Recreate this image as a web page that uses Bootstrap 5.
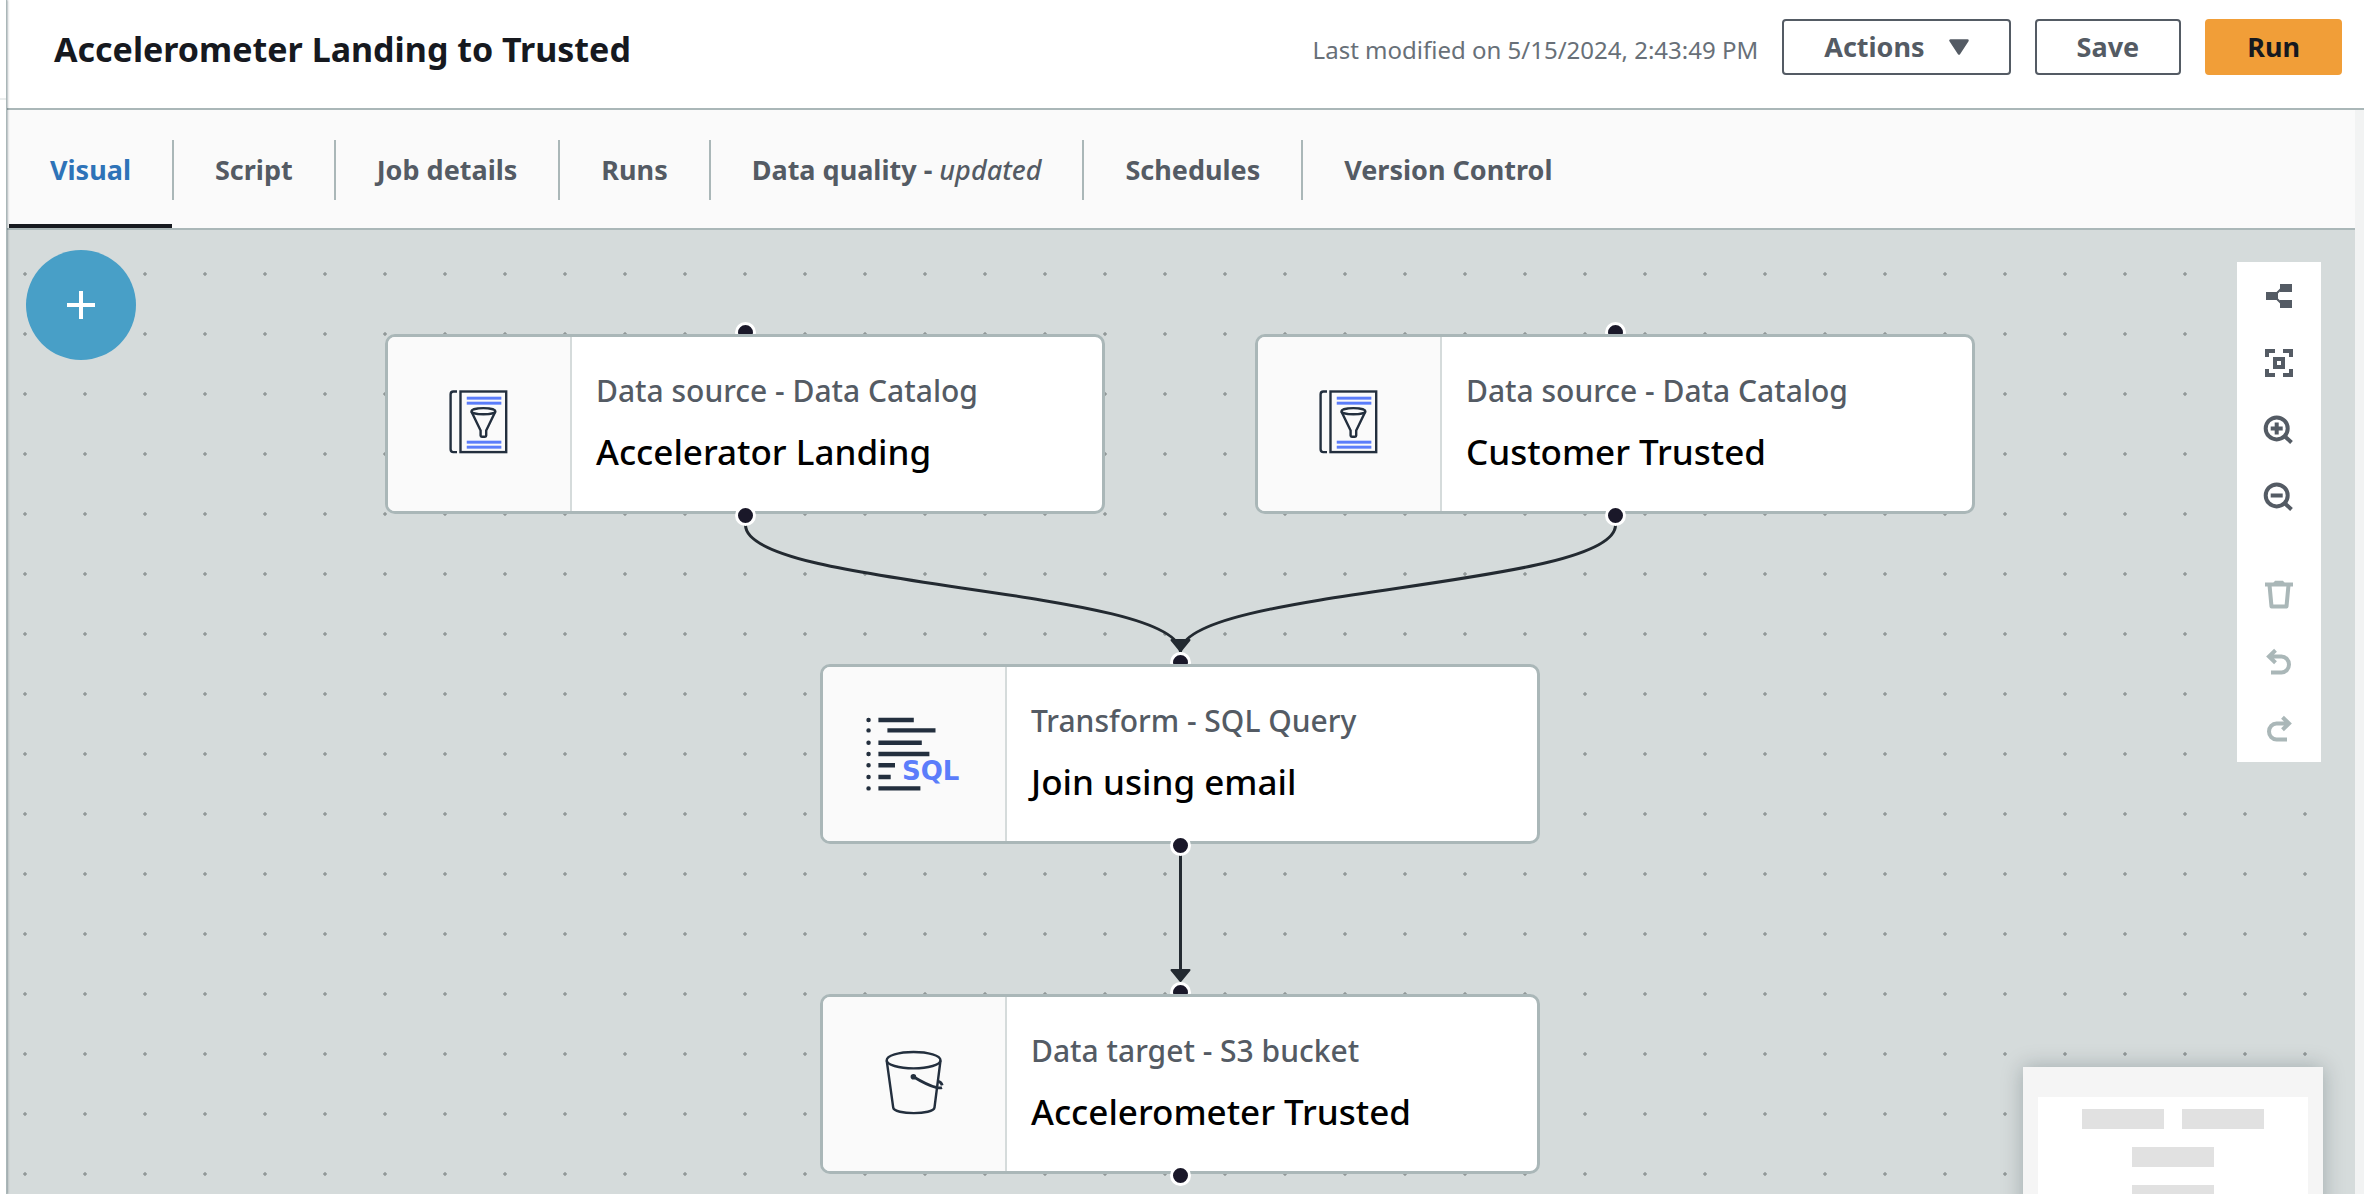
<!DOCTYPE html>
<html lang="en">
<head>
<meta charset="utf-8">
<meta name="viewport" content="width=device-width, initial-scale=1">
<title>Accelerometer Landing to Trusted</title>
<link href="https://cdn.jsdelivr.net/npm/bootstrap@5.3.0/dist/css/bootstrap.min.css" rel="stylesheet">
<style>
  body { font-family: "Noto Sans", "Open Sans", sans-serif; color: #16191f; background: #fff; }
  /* collapsed side panel */
  .side-edge { width: 7px; border-right: 1px solid #aab7b8; box-shadow: 1px 0 2px rgba(0, 28, 36, .3); z-index: 3; padding-top: 98px; }
  .side-edge hr { margin: 0; border-top: 2px solid #eaeded; opacity: 1; }
  /* header */
  .job-header { padding: 19px 22px 33px 47px; border-bottom: 2px solid #aab7b8; }
  .job-title { font-size: 34px; line-height: 60px; height: 56px; font-weight: 700; }
  .modified { font-size: 24px; line-height: 62px; height: 56px; color: #687078; }
  .btn-job { height: 56px; padding: 0 40px; border: 2px solid #545b64; border-radius: 4px; font-size: 27px; line-height: 52px; font-weight: 700; color: #545b64; background: #fff; }
  .btn-job:hover { background: #fafafa; border-color: #16191f; color: #16191f; }
  .btn-run { background: #f19e38; border-color: #f19e38; color: #16191f; }
  .btn-run:hover { background: #e88b01; border-color: #e88b01; }
  /* tabs */
  .work { background: #f2f3f3; padding-right: 9px; }
  .job-tabs { background: #fafafa; border-bottom: 2px solid #aab7b8; padding-left: 2px; }
  .job-tabs .nav-item { display: flex; align-items: center; }
  .job-tabs .nav-item + .nav-item::before { content: ""; width: 2px; height: 60px; margin-top: 2px; background: #aab7b8; }
  .job-tabs .nav-link { height: 118px; padding: 4px 41px 0; border: 0; border-bottom: 4px solid transparent; border-radius: 0; font-size: 27px; line-height: 112px; font-weight: 700; color: #545b64; background: none; }
  .job-tabs .nav-link em { font-weight: 500; }
  .job-tabs .nav-link.active { color: #2e73b8; border-bottom-color: #16191f; }
  /* canvas */
  .graph { background: #d5dbdb radial-gradient(circle at 30px 30px, #919898 1px, #b4bbbb 2px, transparent 2px) -12px 14px / 60px 60px; }
  .edges { position: absolute; left: 0; top: 0; width: 100%; height: 100%; pointer-events: none; }
  .graph-node { position: absolute; width: 720px; height: 180px; }
  .n-source-a { left: 378px; top: 104px; }
  .n-source-b { left: 1248px; top: 104px; }
  .n-join { left: 813px; top: 434px; }
  .n-target { left: 813px; top: 764px; }
  .node-box { position: relative; height: 100%; background: #fff; border: 3px solid #aab7b8; border-radius: 10px; overflow: hidden; }
  .node-icon { width: 184px; background: #fafafa; border-right: 2px solid #d5dbdb; }
  .node-text { padding-left: 24px; gap: 16px; }
  .node-kind { font-size: 30px; line-height: 40px; font-weight: 500; color: #545b64; }
  .node-name { font-size: 35px; line-height: 50px; font-weight: 500; color: #000; }
  .port { position: absolute; left: 50%; width: 21px; height: 21px; margin-left: -10px; border: 3px solid #fff; border-radius: 50%; background: #1a1829; }
  .port-in { top: -12px; }
  .port-out { bottom: -12px; }
  .add-node { position: absolute; left: 19px; top: 20px; width: 110px; height: 110px; border: 0; border-radius: 50%; background: #489fc7; }
  .tools { position: absolute; right: 34px; top: 32px; width: 84px; background: #fff; }
  .tools button { height: 67px; padding: 0; border: 0; border-radius: 0; color: #545b64; }
  .tools button:disabled { color: #aab7b8; opacity: 1; }
  .tools .tool-gap { margin-top: 31px; }
  .minimap { position: absolute; right: 32px; top: 837px; width: 300px; height: 300px; padding: 30px 15px; background: #f5f5f5; box-shadow: 0 0 20px rgba(0, 28, 36, .25); }
</style>
<script src="https://cdn.jsdelivr.net/npm/bootstrap@5.3.0/dist/js/bootstrap.bundle.min.js"></script>
</head>
<body class="d-flex vh-100 overflow-hidden">
<aside class="side-edge flex-shrink-0"><hr></aside>
<div class="d-flex flex-column flex-grow-1">
  <header class="job-header d-flex align-items-start gap-4">
    <h1 class="job-title mb-0 me-auto">Accelerometer Landing to Trusted</h1>
    <span class="modified">Last modified on 5/15/2024, 2:43:49 PM</span>
    <button type="button" class="btn btn-job d-flex align-items-center">Actions
      <svg class="ms-4" width="20" height="16" viewBox="0 0 20 16" aria-hidden="true"><path d="M1.5 1.5h17L10 14.5z" fill="currentColor" stroke="currentColor" stroke-width="2.5" stroke-linejoin="round"/></svg>
    </button>
    <button type="button" class="btn btn-job">Save</button>
    <button type="button" class="btn btn-job btn-run">Run</button>
  </header>
  <div class="work d-flex flex-column flex-grow-1">
    <ul class="nav job-tabs" role="tablist">
      <li class="nav-item"><button class="nav-link active" type="button" role="tab" aria-selected="true">Visual</button></li>
      <li class="nav-item"><button class="nav-link" type="button" role="tab">Script</button></li>
      <li class="nav-item"><button class="nav-link" type="button" role="tab">Job details</button></li>
      <li class="nav-item"><button class="nav-link" type="button" role="tab">Runs</button></li>
      <li class="nav-item"><button class="nav-link" type="button" role="tab">Data quality - <em>updated</em></button></li>
      <li class="nav-item"><button class="nav-link" type="button" role="tab">Schedules</button></li>
      <li class="nav-item"><button class="nav-link" type="button" role="tab">Version Control</button></li>
    </ul>
    <main class="graph position-relative flex-grow-1 overflow-hidden">
      <svg width="0" height="0" class="position-absolute" aria-hidden="true">
        <symbol id="catalog" viewBox="0 0 72 72">
          <g fill="none" stroke="#232f3e" stroke-width="2.4">
            <rect x="17.5" y="3.5" width="45.7" height="60.6"/>
            <path d="M14 3.5h-3.6Q7.6 3.5 7.6 6.3v55Q7.6 64.1 10.4 64.1H14"/>
            <ellipse cx="40.4" cy="23.2" rx="12" ry="3.1"/>
            <path d="M28.4 23.4l9.2 19.2v5q0 1.2 1.2 1.2h3.2q1.2 0 1.2-1.2v-5l9.2-19.2" stroke-linejoin="round"/>
          </g>
          <path d="M23.8 10h34.5M23.8 15h34.5M23.8 54h34.5M23.8 59h34.5" stroke="#c9d3fb" stroke-width="4"/>
          <path d="M23.8 10.2h34.5M23.8 15.2h34.5M23.8 54.2h34.5M23.8 59.2h34.5" stroke="#5b7dfa" stroke-width="2.4"/>
        </symbol>
      </svg>
      <svg class="edges" aria-hidden="true">
        <g fill="none" stroke="#232a31" stroke-width="3">
          <path d="M738.5 295C738.5 358 1173.5 358 1173.5 422"/>
          <path d="M1608.5 295C1608.5 358 1173.5 358 1173.5 422"/>
          <path d="M1173.5 625V742"/>
        </g>
        <g fill="#232a31" stroke="#232a31" stroke-width="2" stroke-linejoin="round">
          <path d="M1164.5 410h18l-9 11z"/>
          <path d="M1164.5 740h18l-9 11z"/>
        </g>
      </svg>

      <div class="graph-node n-source-a">
        <span class="port port-in"></span>
        <div class="node-box d-flex">
          <div class="node-icon d-flex align-items-center justify-content-center"><svg width="72" height="72"><use href="#catalog"/></svg></div>
          <div class="node-text d-flex flex-column justify-content-center"><div class="node-kind">Data source - Data Catalog</div><div class="node-name">Accelerator Landing</div></div>
        </div>
        <span class="port port-out"></span>
      </div>
      <div class="graph-node n-source-b">
        <span class="port port-in"></span>
        <div class="node-box d-flex">
          <div class="node-icon d-flex align-items-center justify-content-center"><svg width="72" height="72"><use href="#catalog"/></svg></div>
          <div class="node-text d-flex flex-column justify-content-center"><div class="node-kind">Data source - Data Catalog</div><div class="node-name">Customer Trusted</div></div>
        </div>
        <span class="port port-out"></span>
      </div>
      <div class="graph-node n-join">
        <span class="port port-in"></span>
        <div class="node-box d-flex">
          <div class="node-icon d-flex align-items-center justify-content-center">
            <svg width="96" height="80" viewBox="0 0 96 80">
              <path d="M12.4 6h35.4M21.4 16.4h48.1M12.4 28.7h43.4M12.4 40h51M12.4 51.2H29M12.4 63h12.3M12.4 74.4h42" stroke="#232f3e" stroke-width="4.4"/>
              <path d="M2.5 6h.1M2.5 16.4h.1M2.5 28.7h.1M2.5 40h.1M2.5 51.2h.1M2.5 63h.1M2.5 74.4h.1" stroke="#232f3e" stroke-width="4.4" stroke-linecap="round"/>
              <text x="36" y="66" font-family="DejaVu Sans, sans-serif" font-weight="700" font-size="26" fill="#5b7dfa">SQL</text>
            </svg>
          </div>
          <div class="node-text d-flex flex-column justify-content-center"><div class="node-kind">Transform - SQL Query</div><div class="node-name">Join using email</div></div>
        </div>
        <span class="port port-out"></span>
      </div>
      <div class="graph-node n-target">
        <span class="port port-in"></span>
        <div class="node-box d-flex">
          <div class="node-icon d-flex align-items-center justify-content-center">
            <svg width="72" height="72" viewBox="0 0 72 72" fill="none" stroke="#232f3e" stroke-width="2.4">
              <ellipse cx="35.6" cy="12.2" rx="26.9" ry="8.2"/>
              <path d="M8.7 12.5L15.2 59.5C16 67 55.6 67 56.5 59.5L62.5 12.5"/>
              <circle cx="35.4" cy="28.7" r="2.8" fill="#232f3e" stroke="none"/>
              <path d="M35.4 28.7Q49 37 58 39.4q4 1 6 .2M60.4 33.4q3 .8 3.8 4" stroke-width="2.8"/>
            </svg>
          </div>
          <div class="node-text d-flex flex-column justify-content-center"><div class="node-kind">Data target - S3 bucket</div><div class="node-name">Accelerometer Trusted</div></div>
        </div>
        <span class="port port-out"></span>
      </div>

      <button type="button" class="add-node d-flex align-items-center justify-content-center" aria-label="Add node">
        <svg width="28" height="28" viewBox="0 0 28 28"><path d="M14 0v28M0 14h28" stroke="#fff" stroke-width="4"/></svg>
      </button>

      <div class="tools d-flex flex-column">
        <button type="button" class="btn" aria-label="Auto layout"><svg width="32" height="32" viewBox="0 0 32 32"><path d="M3 12h12v8H3zM17 4h12v8H17zM17 20h12v8H17z" fill="currentColor"/><path d="M13 14l6-6M13 18l6 6" stroke="currentColor" stroke-width="2"/></svg></button>
        <button type="button" class="btn" aria-label="Fit to screen"><svg width="32" height="32" viewBox="0 0 32 32" fill="none" stroke="currentColor" stroke-width="4"><path d="M12 4H4v6M20 4h8v6M12 28H4v-6M20 28h8v-6M12 12h8v8h-8z"/></svg></button>
        <button type="button" class="btn" aria-label="Zoom in"><svg width="32" height="32" viewBox="0 0 32 32" fill="none" stroke="currentColor" stroke-width="4"><circle cx="13.7" cy="14.4" r="11"/><path d="M21.5 22l7 6.5M7.7 14.4h12M13.7 8.4v12"/></svg></button>
        <button type="button" class="btn" aria-label="Zoom out"><svg width="32" height="32" viewBox="0 0 32 32" fill="none" stroke="currentColor" stroke-width="4"><circle cx="13.7" cy="14.4" r="11"/><path d="M21.5 22l7 6.5M7.7 14.4h12"/></svg></button>
        <button type="button" class="btn tool-gap" aria-label="Delete" disabled><svg width="32" height="32" viewBox="0 0 32 32" fill="none" stroke="currentColor" stroke-width="4"><path d="M2 5.5h28"/><path d="M10 4.2L12 1.8h8l2 2.4z" fill="currentColor" stroke="none"/><path d="M6.5 6l2 21.5h15l2-21.5" stroke-linejoin="round"/></svg></button>
        <button type="button" class="btn" aria-label="Undo" disabled><svg width="32" height="32" viewBox="0 0 32 32" fill="none" stroke="currentColor" stroke-width="4"><path d="M6 10.5h12.5a7.5 8 0 0 1 0 16H8M12.5 4.2L6 10.5l6.5 6.3"/></svg></button>
        <button type="button" class="btn" aria-label="Redo" disabled><svg width="32" height="32" viewBox="0 0 32 32" fill="none" stroke="currentColor" stroke-width="4"><path d="M26 10.5H13.5a7.5 8 0 0 0 0 16H24M19.5 4.2l6.5 6.3-6.5 6.3"/></svg></button>
      </div>

      <div class="minimap">
        <svg class="d-block" width="270" height="240" viewBox="0 0 270 240" role="img" aria-label="Graph overview">
          <path d="M0 0h270v240H0z" fill="#fff"/>
          <path d="M44 12h82v20H44zM144 12h82v20h-82zM94 50h82v20H94zM94 88h82v20H94z" fill="#e1e1e1"/>
        </svg>
      </div>
    </main>
  </div>
</div>
</body>
</html>
